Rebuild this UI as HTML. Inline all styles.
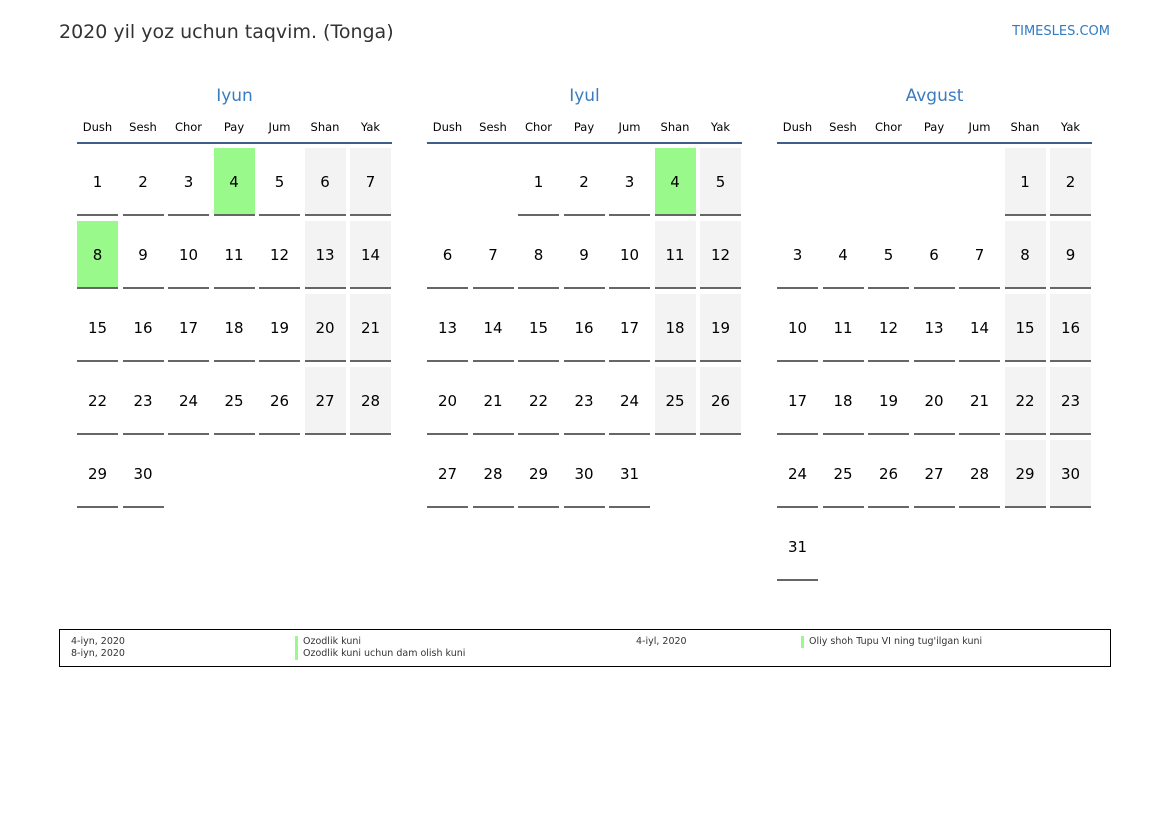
<!DOCTYPE html>
<html><head><meta charset="utf-8"><style>
*{margin:0;padding:0;box-sizing:border-box}
body{width:1169px;height:827px;background:#fff;font-family:"DejaVu Sans","Liberation Sans",sans-serif;position:relative;overflow:hidden;color:#000}
.t{position:absolute;left:59px;top:21px;font-size:19px;color:#333}
.s{position:absolute;right:59px;top:24px;font-size:13px;color:#2f7bc4}
.m{position:absolute;top:85px;width:315px}
.mt{text-align:center;font-size:17px;color:#3a7cc0;height:22px;line-height:22px}
.hd{display:grid;grid-template-columns:repeat(7,41px);column-gap:4.5px;margin-top:9px;height:28px;border-bottom:2px solid #3d5f8a;font-size:11.5px;line-height:22px;text-align:center}
.gr{display:grid;grid-template-columns:repeat(7,41px);column-gap:4.5px;row-gap:5px;grid-auto-rows:68px;margin-top:4px}
.gr div{text-align:center;font-size:15px;line-height:68px;border-bottom:2px solid #666}
.gr .e{border:none}
.gr .w{background:#f3f3f3}
.gr .g{background:#99f98b}
.lg{position:absolute;left:59px;top:629px;width:1052px;height:38px;border:1px solid #000;font-size:9.5px;color:#333;line-height:12px}
.lg span{position:absolute}
.b{border-left:3px solid #99f98b;padding-left:5px}
</style></head><body>
<div class="t">2020 yil yoz uchun taqvim. (Tonga)</div>
<div class="s">TIMESLES.COM</div>

<div class="m" style="left:77px">
<div class="mt">Iyun</div>
<div class="hd"><span>Dush</span><span>Sesh</span><span>Chor</span><span>Pay</span><span>Jum</span><span>Shan</span><span>Yak</span></div>
<div class="gr">
<div>1</div><div>2</div><div>3</div><div class="g">4</div><div>5</div><div class="w">6</div><div class="w">7</div>
<div class="g">8</div><div>9</div><div>10</div><div>11</div><div>12</div><div class="w">13</div><div class="w">14</div>
<div>15</div><div>16</div><div>17</div><div>18</div><div>19</div><div class="w">20</div><div class="w">21</div>
<div>22</div><div>23</div><div>24</div><div>25</div><div>26</div><div class="w">27</div><div class="w">28</div>
<div>29</div><div>30</div>
</div></div>

<div class="m" style="left:427px">
<div class="mt">Iyul</div>
<div class="hd"><span>Dush</span><span>Sesh</span><span>Chor</span><span>Pay</span><span>Jum</span><span>Shan</span><span>Yak</span></div>
<div class="gr">
<div class="e"></div><div class="e"></div><div>1</div><div>2</div><div>3</div><div class="g">4</div><div class="w">5</div>
<div>6</div><div>7</div><div>8</div><div>9</div><div>10</div><div class="w">11</div><div class="w">12</div>
<div>13</div><div>14</div><div>15</div><div>16</div><div>17</div><div class="w">18</div><div class="w">19</div>
<div>20</div><div>21</div><div>22</div><div>23</div><div>24</div><div class="w">25</div><div class="w">26</div>
<div>27</div><div>28</div><div>29</div><div>30</div><div>31</div>
</div></div>

<div class="m" style="left:777px">
<div class="mt">Avgust</div>
<div class="hd"><span>Dush</span><span>Sesh</span><span>Chor</span><span>Pay</span><span>Jum</span><span>Shan</span><span>Yak</span></div>
<div class="gr">
<div class="e"></div><div class="e"></div><div class="e"></div><div class="e"></div><div class="e"></div><div class="w">1</div><div class="w">2</div>
<div>3</div><div>4</div><div>5</div><div>6</div><div>7</div><div class="w">8</div><div class="w">9</div>
<div>10</div><div>11</div><div>12</div><div>13</div><div>14</div><div class="w">15</div><div class="w">16</div>
<div>17</div><div>18</div><div>19</div><div>20</div><div>21</div><div class="w">22</div><div class="w">23</div>
<div>24</div><div>25</div><div>26</div><div>27</div><div>28</div><div class="w">29</div><div class="w">30</div>
<div>31</div>
</div></div>

<div class="lg">
<span style="left:11px;top:6px">4-iyn, 2020</span>
<span style="left:11px;top:18px">8-iyn, 2020</span>
<span class="b" style="left:235px;top:6px">Ozodlik kuni</span>
<span class="b" style="left:235px;top:18px">Ozodlik kuni uchun dam olish kuni</span>
<span style="left:576px;top:6px">4-iyl, 2020</span>
<span class="b" style="left:741px;top:6px">Oliy shoh Tupu VI ning tug'ilgan kuni</span>
</div>
</body></html>
